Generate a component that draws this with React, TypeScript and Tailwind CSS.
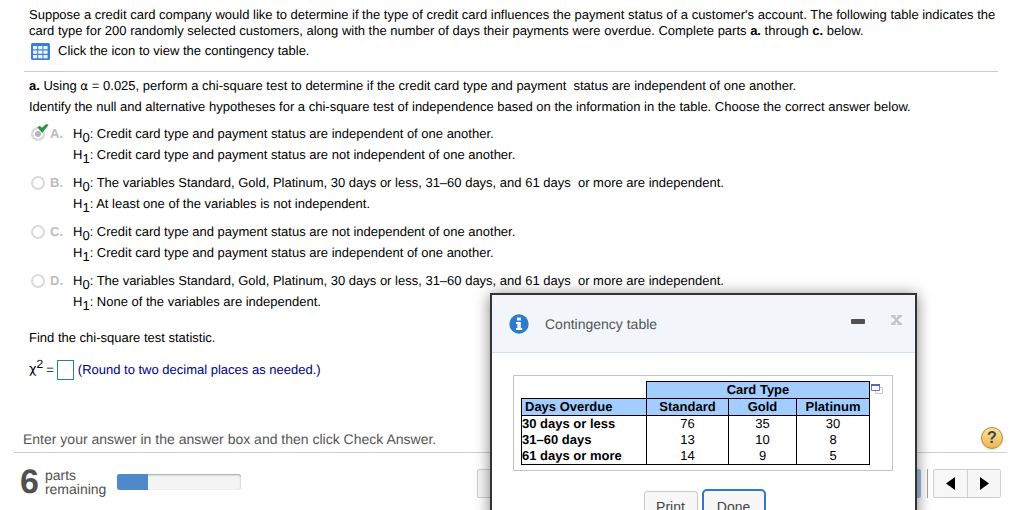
import React from "react";

type Choice = { letter: string; h0: string; h1: string; checked?: boolean };

const choices: Choice[] = [
  {
    letter: "A",
    h0: "Credit card type and payment status are independent of one another.",
    h1: "Credit card type and payment status are not independent of one another.",
    checked: true,
  },
  {
    letter: "B",
    h0: "The variables Standard, Gold, Platinum, 30 days or less, 31–60 days, and 61 days\u00a0 or more are independent.",
    h1: "At least one of the variables is not independent.",
  },
  {
    letter: "C",
    h0: "Credit card type and payment status are not independent of one another.",
    h1: "Credit card type and payment status are independent of one another.",
  },
  {
    letter: "D",
    h0: "The variables Standard, Gold, Platinum, 30 days or less, 31–60 days, and 61 days\u00a0 or more are independent.",
    h1: "None of the variables are independent.",
  },
];

const rows = [
  { label: "30 days or less", values: [76, 35, 30] },
  { label: "31–60 days", values: [13, 10, 8] },
  { label: "61 days or more", values: [14, 9, 5] },
];

function GridIcon() {
  return (
    <svg width="19" height="17" viewBox="0 0 19 17" aria-hidden="true">
      <rect width="19" height="17" rx="1.5" fill="#3b7dd8" />
      {[3, 7.5, 12].map((y) =>
        [2, 7.2, 12.4].map((x) => (
          <rect key={`${x}-${y}`} x={x} y={y} width="4.2" height="3.3" fill="#eaf3ff" />
        ))
      )}
    </svg>
  );
}

function Hypothesis({ index, text }: { index: number; text: string }) {
  return (
    <span className="flex h-[21px] items-center whitespace-pre">
      <span>H</span>
      <span className="relative top-1 text-[13px]">{index}</span>
      <span>: {text}</span>
    </span>
  );
}

function ChoiceRow({ choice }: { choice: Choice }) {
  const id = `choice-${choice.letter}`;
  return (
    <div className="flex items-start">
      <span className="relative flex h-[21px] w-5 items-center">
        <input
          id={id}
          type="radio"
          name="hypotheses"
          defaultChecked={choice.checked}
          className="ml-0.5 size-[14px] appearance-none rounded-full border-2 border-[#dadada] bg-white checked:bg-[#b5b5b5] checked:shadow-[inset_0_0_0_2px_white]"
        />
        {choice.checked && (
          <svg className="absolute top-px left-2 h-[10px] w-3" viewBox="0 0 12 10" aria-hidden="true">
            <path d="M0.3 3.2 2.8 1.8 4.8 3.8 9.4 0 11.6 0.9 5.2 9Z" fill="#2f9445" />
          </svg>
        )}
      </span>
      <label htmlFor={id} className="flex">
        <span className="flex h-[21px] w-6 items-center pl-px font-bold text-[#bdbdbd]">{choice.letter}.</span>
        <span>
          <Hypothesis index={0} text={choice.h0} />
          <Hypothesis index={1} text={choice.h1} />
        </span>
      </label>
    </div>
  );
}

function ContingencyTable() {
  return (
    <table className="w-[348px] table-fixed border-collapse text-[13px] leading-4 text-black">
      <colgroup>
        <col className="w-[125px]" />
        <col className="w-[82px]" />
        <col className="w-[68px]" />
        <col className="w-[73px]" />
      </colgroup>
      <thead>
        <tr>
          <td />
          <th colSpan={3} className="border border-black bg-[#a3cdff] p-0">
            Card Type
          </th>
        </tr>
        <tr className="bg-[#a3cdff]">
          <th className="border border-black p-0 pl-[3px] text-left">Days Overdue</th>
          <th className="border border-black p-0">Standard</th>
          <th className="border border-black p-0">Gold</th>
          <th className="border border-black p-0">Platinum</th>
        </tr>
      </thead>
      <tbody className="border border-black">
        {rows.map((row) => (
          <tr key={row.label}>
            <th className="border-x border-black p-0 text-left">{row.label}</th>
            {row.values.map((value, i) => (
              <td key={i} className="border-x border-black p-0 text-center">
                {value}
              </td>
            ))}
          </tr>
        ))}
      </tbody>
    </table>
  );
}

function ContingencyDialog() {
  return (
    <section
      role="dialog"
      aria-labelledby="dialog-title"
      className="absolute top-[293px] right-[107px] w-[427px] border-2 border-[#333] bg-white shadow-[0_2px_14px_rgba(0,0,0,0.5)]"
    >
      <header className="flex h-[58px] items-center border-b border-[#cfe2f3] bg-[#f2f6fb] pr-[11px] pl-[17px]">
        <svg width="20" height="20" viewBox="0 0 20 20" aria-hidden="true">
          <circle cx="10" cy="10" r="9.7" fill="#2f7acb" />
          <path d="M8 3.4h3.8v3H8zM7 8h4.8v6h1.4v2H7v-2h1.4v-4H7z" fill="#fff" />
        </svg>
        <h2 id="dialog-title" className="ml-4 text-sm text-[#555]">
          Contingency table
        </h2>
        <button aria-label="Minimize" className="mb-1 ml-auto flex h-5 w-5 items-center justify-center">
          <span className="h-[5px] w-[14px] rounded-[1px] bg-[#505050]" />
        </button>
        <button aria-label="Close" className="mb-2 ml-5 flex h-5 w-4 items-center justify-center">
          <svg width="11" height="10" viewBox="0 0 11 10" aria-hidden="true">
            <path
              d="M0 0h4.6v2L5.5 3 6.4 2V0H11v2.2H9.6L7 5l2.6 2.8H11V10H6.4V8L5.5 7 4.6 8v2H0V7.8h1.4L4 5 1.4 2.2H0z"
              fill="#c3c6ca"
            />
          </svg>
        </button>
      </header>
      <div className="mt-[22px] mr-[22px] ml-[21px] flex h-[96px] items-start border border-[#c4c4c4] pt-[5px] pl-[7px]">
        <ContingencyTable />
        <button aria-label="Copy table" className="mt-[3px] ml-px">
          <svg className="block" width="12" height="10" viewBox="0 0 12 10" aria-hidden="true">
            <path d="M4.5 3.5h7v6h-7z" fill="#fff" stroke="#bfc5e4" />
            <path d="M.5.5h8v6h-8z" fill="#fff" stroke="#6d78b8" />
            <path d="M0 0h9v2H0z" fill="#5b68ad" />
          </svg>
        </button>
      </div>
      <footer className="mt-[18px] flex justify-center gap-1 pb-4 pl-0.5 text-sm text-[#444]">
        <button className="mt-0.5 h-8 w-[54px] rounded-[3px] border border-[#c8c8c8] bg-[#f7f7f7]">Print</button>
        <button className="h-9 w-16 rounded-[5px] border-2 border-[#2f79c8] bg-[#f7f7f7]">Done</button>
      </footer>
    </section>
  );
}

export default function App() {
  return (
    <div className="relative flex h-screen flex-col overflow-hidden bg-white font-['Liberation_Sans',Arial,sans-serif] text-[13px] leading-4 text-black [text-rendering:geometricPrecision]">
      <main className="pr-[26px] pl-[29px]">
        <p className="pt-[7px]">
          Suppose a credit card company would like to determine if the type of credit card influences the payment status of a
          customer's account. The following table indicates the card type for 200 randomly selected customers, along with the
          number of days their payments were overdue. Complete parts <b>a.</b> through <b>c.</b> below.
        </p>
        <a href="#contingency" className="mt-[3px] flex h-[18px] items-center gap-2 pl-0.5">
          <GridIcon />
          Click the icon to view the contingency table.
        </a>
        <hr className="mt-[11px] -ml-[5px] border-[#c9c9d6]" />
        <p className="mt-1.5">
          <b>a.</b> Using <span className="font-['DejaVu_Sans',sans-serif] text-xs">α</span> = 0.025, perform a chi-square test
          to determine if the credit card type and payment{"\u00a0 "}status are independent of one another.
        </p>
        <p className="mt-[5px]">
          Identify the null and alternative hypotheses for a chi-square test of independence based on the information in the
          table. Choose the correct answer below.
        </p>
        <fieldset className="mt-2 flex flex-col gap-[7px]">
          {choices.map((choice) => (
            <ChoiceRow key={choice.letter} choice={choice} />
          ))}
        </fieldset>
        <p className="mt-[18px]">Find the chi-square test statistic.</p>
        <div className="mt-3.5 flex h-5 items-center">
          <label htmlFor="statistic" className="flex items-center">
            <span className="font-['DejaVu_Sans',sans-serif]">χ</span>
            <sup className="-top-1.5 text-xs">2</sup>
            <span className="ml-[3px]">=</span>
          </label>
          <input id="statistic" type="text" className="mr-1 ml-[3px] h-5 w-[17px] border border-[#2e7ca0] bg-white" />
          <span className="text-[#000080]">(Round to two decimal places as needed.)</span>
        </div>
      </main>

      <div className="mt-auto mr-[17px] ml-[14px] flex h-[28px] items-center justify-between border-b border-[#cbd0dd] pl-[9px]">
        <p className="text-sm text-[#555]">Enter your answer in the answer box and then click Check Answer.</p>
      </div>
      <button
        aria-label="Help"
        className="absolute right-[21px] bottom-[61px] flex size-[22px] items-center justify-center rounded-full border border-[#b58b3c] bg-linear-to-b from-[#fbe29a] to-[#eeb650] text-base font-bold text-[#444] shadow-sm"
      >
        ?
      </button>
      <footer className="flex h-[57px] shrink-0 items-center pr-[23px] pl-5 text-[#505050]">
        <span className="text-[34px] font-bold">6</span>
        <p className="ml-1.5 text-sm leading-[14px]">
          parts
          <br />
          remaining
        </p>
        <div className="ml-[11px] h-4 w-[124px] overflow-hidden rounded-[3px] bg-[#f4f4f4] shadow-[inset_0_1px_2px_rgba(0,0,0,0.35)]">
          <div className="h-full w-1/4 bg-[#5089c7]" />
        </div>
        <div className="mt-[3px] ml-auto flex items-center">
          <button className="h-[29px] w-[200px] rounded-[2px] border border-[#cfcfcf] bg-[#f7f7f7]" aria-label="Clear all" />
          <button className="ml-11 h-[29px] w-[200px] rounded-[2px] bg-[#9fbfe0]" aria-label="Check answer" />
          <span className="mx-[5px] ml-1.5 h-[29px] w-px bg-[#a5a5a5]" />
          <div className="flex h-[29px] overflow-hidden rounded-[2px] border border-[#cfcfcf] bg-[#f7f7f7]">
            <button aria-label="Previous" className="flex w-[34px] items-center justify-center border-r border-[#cfcfcf]">
              <svg width="9" height="13" viewBox="0 0 9 13" aria-hidden="true">
                <path d="M9 0v13L0 6.5z" fill="#000" />
              </svg>
            </button>
            <button aria-label="Next" className="flex w-8 items-center justify-center">
              <svg width="9" height="13" viewBox="0 0 9 13" aria-hidden="true">
                <path d="M0 0v13l9-6.5z" fill="#000" />
              </svg>
            </button>
          </div>
        </div>
      </footer>
      <ContingencyDialog />
    </div>
  );
}
